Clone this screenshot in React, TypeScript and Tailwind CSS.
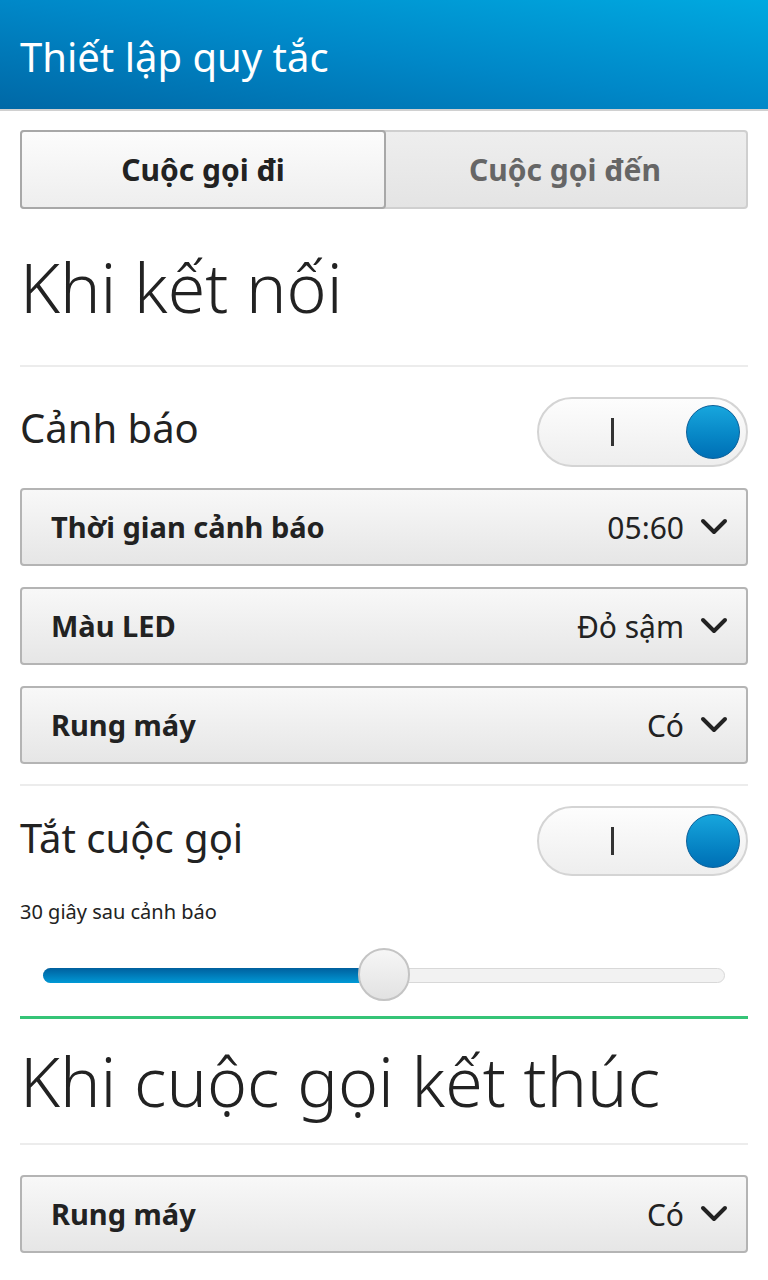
import React from "react";

const font = { fontFamily: "'Noto Sans', Lato, sans-serif" };

const Chevron: React.FC = () => (
  <svg width="28" height="18" viewBox="0 0 28 18" className="ml-4">
    <path d="M3 3 L14 14 L25 3" fill="none" stroke="#222" strokeWidth="4" strokeLinecap="round" strokeLinejoin="round" />
  </svg>
);

const Dropdown: React.FC<{ label: string; value: string }> = ({ label, value }) => (
  <div className="flex h-[78px] items-center justify-between rounded-[4px] border-2 border-[#b4b4b4] bg-gradient-to-b from-[#f8f8f8] to-[#e6e6e6] pl-[29px] pr-[18px]">
    <span className="text-[29px] font-bold text-[#222]">{label}</span>
    <div className="flex items-center">
      <span className="text-[30px] text-[#222]">{value}</span>
      <Chevron />
    </div>
  </div>
);

const Toggle: React.FC = () => (
  <div className="flex h-[70px] w-[211px] items-center justify-between rounded-full border-2 border-[#d4d4d4] bg-gradient-to-b from-[#fdfdfd] to-[#eeeeee] pl-[72px] pr-[6px]">
    <div className="h-[28px] w-[3px] bg-[#333]" />
    <div className="h-[54px] w-[54px] rounded-full border border-[#0a5f99] bg-gradient-to-b from-[#17a6dd] to-[#006fb5]" />
  </div>
);

const Divider: React.FC = () => <div className="h-[2px] bg-[#ececec]" />;

export default function App() {
  return (
    <div className="min-h-[1280px] bg-white" style={font}>
      <div className="flex h-[111px] items-center border-b-2 border-[#d0d0d0] bg-gradient-to-tr from-[#0068a6] via-[#0088c8] to-[#00a9e0] px-5">
        <h1 className="mt-1 text-[40px] text-white">Thiết lập quy tắc</h1>
      </div>

      <div className="px-5">
        <div className="mt-[19px] flex h-[79px] rounded-[4px] border-2 border-[#cfcfcf] bg-gradient-to-b from-[#eeeeee] to-[#e4e4e4]">
          <div className="-m-[2px] flex flex-1 items-center justify-center rounded-[4px] border-2 border-[#a8a8a8] bg-gradient-to-b from-[#fcfcfc] to-[#eeeeee] text-[30px] font-bold text-[#222]">
            Cuộc gọi đi
          </div>
          <div className="flex flex-1 items-center justify-center text-[30px] font-bold text-[#666]">
            Cuộc gọi đến
          </div>
        </div>

        <div className="flex h-[156px] items-center">
          <h2 className="text-[68px] font-light text-[#222]">Khi kết nối</h2>
        </div>
        <Divider />

        <div className="mt-[30px] flex items-center justify-between">
          <span className="-mt-[9px] text-[40px] text-[#222]">Cảnh báo</span>
          <Toggle />
        </div>

        <div className="mt-[21px] flex flex-col gap-[21px]">
          <Dropdown label="Thời gian cảnh báo" value="05:60" />
          <Dropdown label="Màu LED" value="Đỏ sậm" />
          <Dropdown label="Rung máy" value="Có" />
        </div>

        <div className="mt-[20px]">
          <Divider />
        </div>

        <div className="mt-[20px] flex items-center justify-between">
          <span className="-mt-[6px] text-[40px] text-[#222]">Tắt cuộc gọi</span>
          <Toggle />
        </div>

        <p className="mt-[21px] text-[20px] text-[#222]">30 giây sau cảnh báo</p>

        <div className="relative mx-[23px] mt-[21px] h-[54px]">
          <div className="absolute left-0 right-0 top-[20px] h-[15px] rounded-full border border-[#d8d8d8] bg-[#f2f2f2]" />
          <div className="absolute left-0 top-[20px] h-[15px] w-[342px] rounded-l-full bg-gradient-to-b from-[#00609e] to-[#0099d6]" />
          <div className="absolute left-[315px] top-0 h-[53px] w-[52px] rounded-full border-2 border-[#c4c4c4] bg-gradient-to-b from-[#f6f6f6] to-[#e2e2e2]" />
        </div>

        <div className="mt-[14px] h-[3px] bg-[#35c477]" />

        <div className="flex h-[124px] items-center">
          <h2 className="text-[68px] font-light text-[#222]">Khi cuộc gọi kết thúc</h2>
        </div>
        <Divider />

        <div className="mt-[30px]">
          <Dropdown label="Rung máy" value="Có" />
        </div>
      </div>
    </div>
  );
}
